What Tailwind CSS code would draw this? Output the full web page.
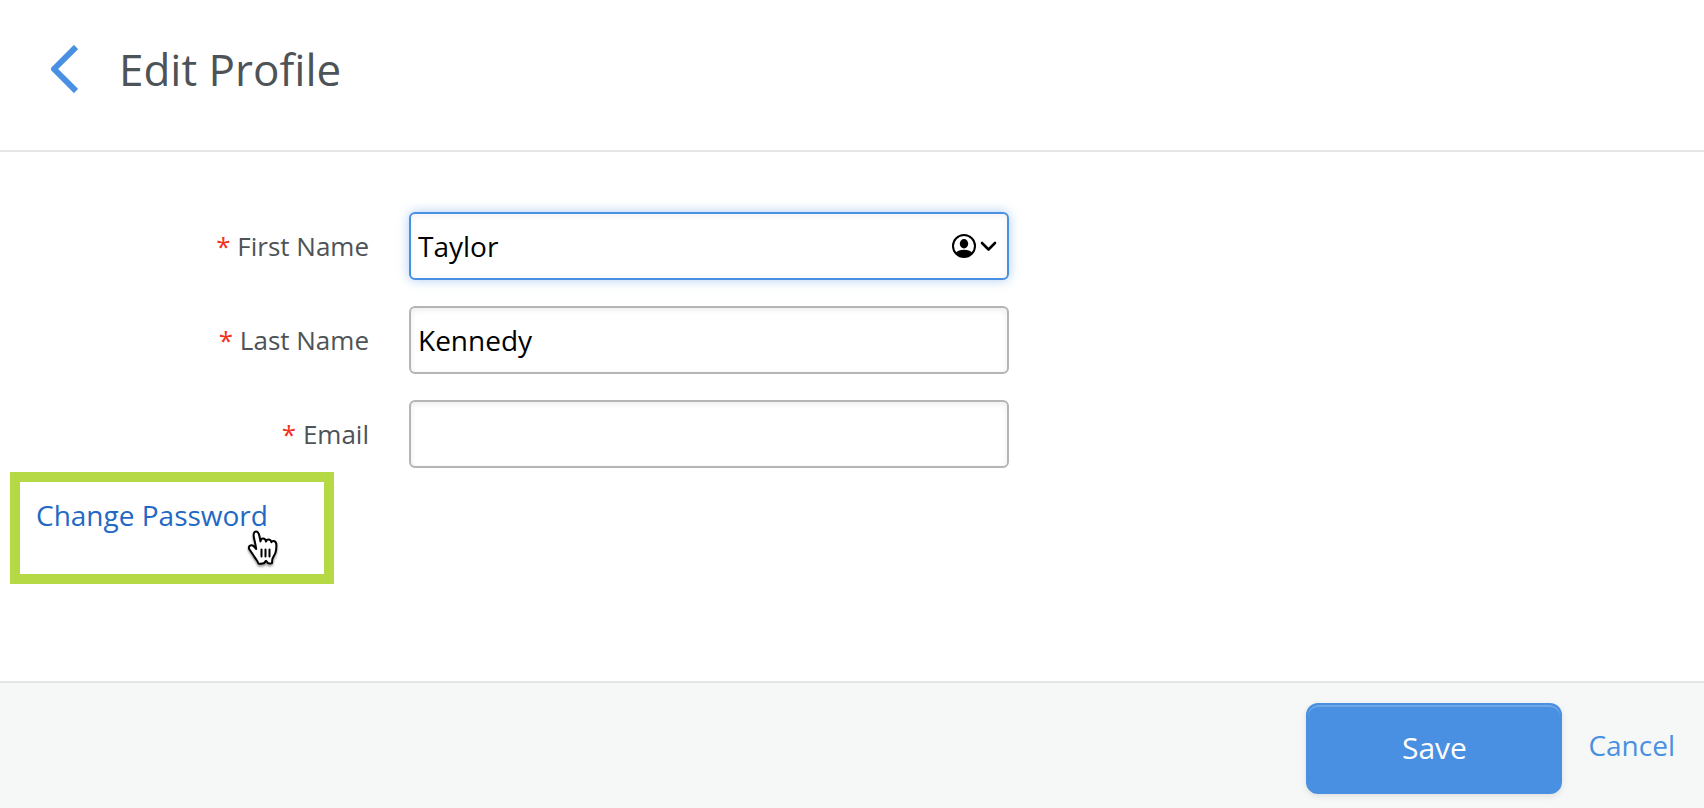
<!DOCTYPE html>
<html lang="en">
<head>
<meta charset="utf-8">
<meta name="viewport" content="width=device-width, initial-scale=1">
<title>Edit Profile</title>
<script src="https://cdn.jsdelivr.net/npm/@tailwindcss/browser@4"></script>
</head>
<body class="flex min-h-screen flex-col bg-white font-['Open_Sans',sans-serif] text-[#4d5357]">
  <header class="flex items-center gap-[41px] border-b-2 border-[#e5e5e5] px-12 pt-9 pb-12">
    <button type="button" aria-label="Back" class="pl-0.5">
      <svg class="block h-12 w-7" viewBox="0 0 28 48" fill="none" stroke="#4a90e2" stroke-width="6" stroke-linejoin="round" aria-hidden="true"><path d="M26 2 4 24l22 22"/></svg>
    </button>
    <h1 class="py-1 text-[44px] leading-[58px]">Edit Profile</h1>
  </header>

  <form id="profile" class="flex flex-1 flex-col pt-[60px]">
    <div class="flex flex-col gap-[26px]">
      <div class="flex items-center gap-10">
        <label for="first" class="w-[369px] shrink-0 text-right text-[26px] leading-9"><span class="text-[#f5301c]">*</span> First Name</label>
        <div class="relative w-full max-w-[600px]">
          <input id="first" type="text" value="Taylor" class="block h-[68px] w-full rounded-md border-2 border-[#4a90e2] bg-white pr-20 pl-[7px] text-[28px] text-black shadow-[0_0_12px_rgba(74,144,226,0.45),inset_0_2px_6px_rgba(0,0,0,0.06)] outline-none">
          <button type="button" aria-label="Fill in from contacts" class="absolute top-[22px] right-3 flex items-center gap-1">
            <svg class="size-6" viewBox="0 0 24 24" aria-hidden="true"><circle cx="12" cy="12" r="11" fill="none" stroke="#000" stroke-width="2"/><ellipse cx="12" cy="9.7" rx="4.2" ry="4.7"/><path d="M3.500 19C5.500 16.800 8.500 15.800 12 15.800s6.500 1 8.500 3.200A11.200 11.200 0 0 1 12 23.200 11.200 11.200 0 0 1 3.500 19Z"/></svg>
            <svg class="h-3 w-[17px]" viewBox="0 0 17 12" fill="none" stroke="#000" stroke-width="2.600" stroke-linecap="round" stroke-linejoin="round" aria-hidden="true"><path d="m2 3 6.500 6.500L15 3"/></svg>
          </button>
        </div>
      </div>
      <div class="flex items-center gap-10">
        <label for="last" class="w-[369px] shrink-0 text-right text-[26px] leading-9"><span class="text-[#f5301c]">*</span> Last Name</label>
        <input id="last" type="text" value="Kennedy" class="block h-[68px] w-full max-w-[600px] rounded-md border-2 border-[#b5b5b5] bg-white px-[7px] text-[28px] text-black shadow-[inset_0_2px_6px_rgba(0,0,0,0.08)]">
      </div>
      <div class="flex items-center gap-10">
        <label for="email" class="w-[369px] shrink-0 text-right text-[26px] leading-9"><span class="text-[#f5301c]">*</span> Email</label>
        <input id="email" type="email" class="block h-[68px] w-full max-w-[600px] rounded-md border-2 border-[#b5b5b5] bg-white px-[7px] text-[28px] text-black shadow-[inset_0_2px_6px_rgba(0,0,0,0.08)]">
      </div>
    </div>
    <div class="relative mt-1 ml-2.5 h-28 w-81 border-10 border-[#b5d944] pt-3 pl-4">
      <a href="#" class="text-[28px] leading-[42px] whitespace-nowrap text-[#2368c4]">Change Password</a>
      <svg class="absolute top-12 left-[226px] h-9 w-9 drop-shadow-[0_2px_1px_rgba(0,0,0,0.4)]" viewBox="0 0 36 36" fill="#fff" stroke="#000" stroke-width="2" stroke-linejoin="round" stroke-linecap="round" aria-hidden="true">
        <path d="M12.300 33.500c-.3-2.500-2.600-4.500-4.300-7.300-1.300-2.200-3.200-4.700-4.500-6.700-1.200-1.800-.6-3.500.9-4 1.600-.5 3.300.4 4.400 1.800l1.400 1.700c-.3-2.900-1.300-6.900-2.200-11C7.300 5 7.500 1.800 9.800 1.600c2.200-.2 3.100 1.900 3.700 4.900l1 5c.2-2.200 1.200-2.900 2.500-2.900 1.600 0 2.700 1 3 2.900.2-1.200 1.100-2 2.500-2 1.600 0 2.600 1 2.900 2.700.4-1 1.200-1.300 2.300-1.200 1.900.2 2.700 1.700 2.700 4.200 0 3.200-.2 5.200-.9 7.300-.8 2.300-2.600 4.800-3.100 6.500-.3 1.100-.3 3-.3 4.100-1.400.4-2.900.4-4.100 0-.7-.6-1.300-2-2-2.300-.8.400-1.400 2-2.200 2.500-1.700.5-3.900.5-5.500.2Z"/>
        <path d="M15.500 19.500v7M19.500 19.500v7M23.500 19.500v7" fill="none"/>
      </svg>
    </div>
  </form>

  <footer class="flex items-center justify-end gap-[26px] border-t-2 border-[#e2e5e4] bg-[#f6f8f7] pt-5 pr-[29px] pb-3.5">
    <button type="submit" form="profile" class="h-[91px] w-64 rounded-xl border-2 border-[#4a90e2] bg-[#4a90e2] pb-0.5 text-[30px] text-white shadow-[0_2px_6px_rgba(0,0,0,0.1),inset_0_2px_0_rgba(255,255,255,0.2)]">Save</button>
    <a href="#" class="pb-2 text-[28px] leading-[42px] text-[#4a90e2]">Cancel</a>
  </footer>
</body>
</html>
